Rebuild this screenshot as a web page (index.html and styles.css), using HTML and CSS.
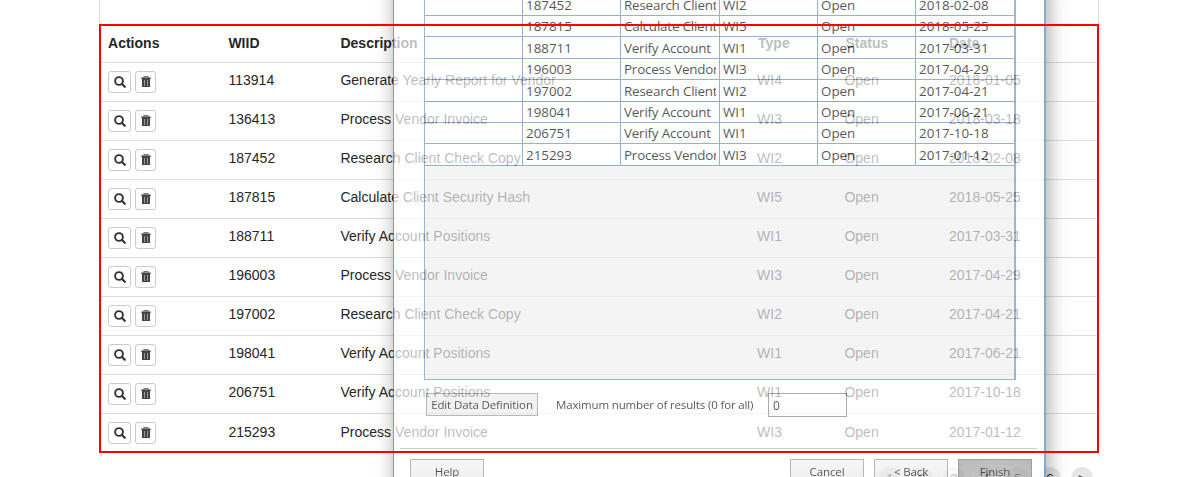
FILE: index.html
```html
<!DOCTYPE html>
<html lang="en">
<head>
<meta charset="utf-8">
<title>Work Items</title>
<link rel="stylesheet" href="styles.css">
</head>
<body>
<svg class="defs" aria-hidden="true">
  <symbol id="search" viewBox="0 0 12 12"><circle cx="5" cy="5" r="3.9" fill="none" stroke="#333" stroke-width="1.9"/><path d="M8 8 10.8 10.8" stroke="#333" stroke-width="2.2" stroke-linecap="round"/></symbol>
  <symbol id="trash" viewBox="0 0 10 11"><path d="M3 1.5V.6h4v.9" fill="none" stroke="#777" stroke-width="1.2"/><path d="M.3 1.5h9.4V3H.3z" fill="#444"/><path d="M1 3h8v8H1z" fill="#444"/><path d="M3.5 4v6M6.5 4v6" stroke="#999" stroke-width="1"/></symbol>
</svg>
<main class="page">
  <section class="panel">
    <div class="table" id="items">
      <div class="row head"><span>Actions</span><span>WIID</span><span>Description</span><span>Type</span><span>Status</span><span>Date</span></div>
    </div>
  </section>
  <nav class="pager"><span>1</span><span>2</span><span>3</span><span>4</span><span>5</span><span>6</span><span>&gt;</span></nav>
  <section class="dialog">
    <div class="listbox"><div class="grid" id="grid"></div></div>
    <div class="options">
      <button class="btn edit">Edit Data Definition</button>
      <label class="max">Maximum number of results (0 for all)</label>
      <input class="num" value="0">
    </div>
    <div class="footer">
      <button class="btn">Help</button>
      <span class="space"></span>
      <button class="btn">Cancel</button>
      <button class="btn">&lt; Back</button>
      <button class="btn primary">Finish</button>
    </div>
  </section>
  <div class="highlight"></div>
</main>
<script src="app.js"></script>
</body>
</html>
```
FILE: styles.css
```css
* { box-sizing: border-box; }
body { margin: 0; background: #fff; color: #262626; font: 14px/20px "Liberation Sans", Arial, sans-serif; }
.defs { display: none; }
.page { position: relative; width: 1198px; height: 477px; overflow: hidden; }
.panel { width: 1000px; height: 452px; margin-left: 99px; padding-top: 24px; border: solid #ddd; border-width: 0 1px; }
.row { display: grid; grid-template-columns: 120.4px 112px 416.6px 87.4px 104.6px 148px; height: 39px; padding: 7px 0 0 8px; border-bottom: 1px solid #ddd; letter-spacing: .02px; }
.row.head { grid-template-columns: 120.4px 112px 417.6px 87.4px 103.6px 148px; padding-top: 9px; font-weight: bold; }
.row:last-child { border-bottom: 0; padding-top: 8px; }
.row:last-child .actions { padding-top: 0; }
.actions { display: flex; gap: 4px; padding-top: 1px; }
.icon-btn { display: flex; align-items: flex-start; justify-content: center; width: 23px; height: 22px; padding-top: 4px; border: 1px solid #ccc; border-radius: 3px; background: #fff; }
.icon-btn + .icon-btn { width: 21px; }
.icon-search { width: 12px; height: 12px; }
.icon-trash { width: 10px; height: 11px; }
.pager { display: flex; gap: 10px; margin: 15px 0 0 879px; font-size: 14px; line-height: 24px; text-align: center; }
.pager span { width: 22px; height: 22px; border-radius: 50%; background: #e6e6e6; color: #333; }
.dialog { position: absolute; left: 393px; top: -20px; width: 653px; height: 520px; padding: 0 7px 0 6px; border: solid #5087b9; border-width: 0 2px 0 1px; border-left-color: #247cc4; background: #fff; box-shadow: 2px 0 19px rgba(0,0,0,.52); opacity: .7; font-family: "Open Sans", "Noto Sans", sans-serif; color: #0c0c0c; }
.listbox { width: 592px; height: 400px; margin-left: 24px; border: 1px solid #7398bd; border-right-width: 2px; background: #f0f0f0; }
.grid { display: grid; grid-template-rows: 35px 21px 22px 21px 22px 21px 21px 22px; }
.record { display: grid; grid-template-columns: 98px 98px 99px 98px 98px 98px; background: #fff; border-bottom: 1px solid #6791bd; font-size: 13.4px; line-height: 19px; letter-spacing: -.03px; }
.record span { display: flex; align-items: flex-end; overflow: hidden; padding-left: 3px; margin-right: 3px; white-space: nowrap; }
.record .cell:nth-child(3) span { letter-spacing: -.2px; }
.cell { border-right: 1px solid #6791bd; overflow: hidden; display: grid; }
.cell:last-child { border-right: 0; }
.options { display: flex; height: 69px; padding: 13px 0 0 26px; border-bottom: 1px solid #b5b5b5; font-size: 11.5px; line-height: 24px; letter-spacing: -.15px; }
.btn { width: 74px; height: 24px; padding: 0; border: 1px solid #999; background: linear-gradient(#f4f4f4, #e6e6e6); font: 11.5px/24px "Open Sans", sans-serif; letter-spacing: -.12px; color: #0c0c0c; }
.btn.edit { width: 112px; height: 23px; line-height: 21px; background: #ececec; }
.btn.primary { border-color: #777; background: radial-gradient(ellipse at 50% 100%, #b5b5b5, #999); }
.max { margin-left: 18px; width: 212px; white-space: nowrap; }
.num { width: 79px; height: 24px; padding: 0 4px; border: 1px solid #888; font: 12px "Open Sans", sans-serif; color: #0c0c0c; }
.footer { display: flex; gap: 10px; padding: 10px 5px 0 10px; }
.space { flex: 1; }
.highlight { position: absolute; left: 99px; top: 24px; width: 1000px; height: 429px; border: 2px solid #f00; }
```
FILE: app.js
```js
const items = [
  ["113914", "Generate Yearly Report for Vendor", "WI4", "2018-01-05"],
  ["136413", "Process Vendor Invoice", "WI3", "2018-03-18"],
  ["187452", "Research Client Check Copy", "WI2", "2018-02-08"],
  ["187815", "Calculate Client Security Hash", "WI5", "2018-05-25"],
  ["188711", "Verify Account Positions", "WI1", "2017-03-31"],
  ["196003", "Process Vendor Invoice", "WI3", "2017-04-29"],
  ["197002", "Research Client Check Copy", "WI2", "2017-04-21"],
  ["198041", "Verify Account Positions", "WI1", "2017-06-21"],
  ["206751", "Verify Account Positions", "WI1", "2017-10-18"],
  ["215293", "Process Vendor Invoice", "WI3", "2017-01-12"]
];
const icon = n => `<span class="icon-btn"><svg class="icon-${n}"><use href="#${n}"/></svg></span>`;
document.getElementById("items").insertAdjacentHTML("beforeend", items.map(([id, text, type, date]) =>
  `<div class="row"><div class="actions">${icon("search")}${icon("trash")}</div><span>${id}</span><span>${text}</span><span>${type}</span><span>Open</span><span>${date}</span></div>`).join(""));
// The grid's columns are narrow, so descriptions are shortened to what fits.
const fit = text => text.split(" ").slice(0, 2).join(" ");
document.getElementById("grid").innerHTML = items.slice(2).map(([id, text, type, date]) =>
  `<div class="record">${["", id, fit(text), type, "Open", date].map(v => `<div class="cell"><span>${v}</span></div>`).join("")}</div>`).join("");
```
